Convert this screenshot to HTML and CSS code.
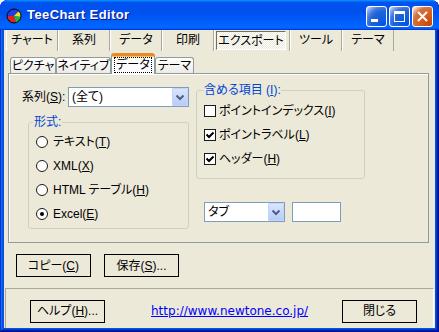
FILE: index.html
```html
<!DOCTYPE html>
<html lang="ja">
<head>
  <meta charset="UTF-8">
  <title>TeeChart Editor</title>
  <link rel="stylesheet" href="styles.css">
</head>
<body>
  <div class="window">
    <div class="titlebar">
      <svg class="app-icon" width="16" height="16" viewBox="0 0 16 16">
        <path d="M8 8 L1 8 A7 7 0 0 1 13 3 Z" fill="#1d3fe0"/>
        <path d="M8 8 L13 3 A7 7 0 0 1 15 9 Z" fill="#f6e21c"/>
        <path d="M8 8 L15 9 A7 7 0 0 1 10 14.7 Z" fill="#1fb33a"/>
        <path d="M8 8 L10 14.7 A7 7 0 0 1 1 8 Z" fill="#e3201b"/>
        <circle cx="8" cy="8" r="7" fill="none" stroke="#000" stroke-width="1"/>
      </svg>
      <span class="title">TeeChart Editor</span>
      <div class="title-buttons">
        <span class="tbtn">
          <svg width="21" height="21" viewBox="0 0 21 21"><rect x="5" y="13" width="7" height="3" fill="#fff"/></svg>
        </span>
        <span class="tbtn">
          <svg width="21" height="21" viewBox="0 0 21 21"><rect x="5.5" y="5.5" width="10" height="10" fill="none" stroke="#fff"/><rect x="5" y="5" width="11" height="3" fill="#fff"/></svg>
        </span>
        <span class="tbtn close">
          <svg width="21" height="21" viewBox="0 0 21 21"><path d="M6 6 L15 15 M15 6 L6 15" stroke="#fff" stroke-width="2"/></svg>
        </span>
      </div>
    </div>

    <div class="client">
      <!-- メインのタブ -->
      <div class="main-tabs">
        <div class="mtab">チャート</div>
        <div class="mtab">系列</div>
        <div class="mtab">データ</div>
        <div class="mtab">印刷</div>
        <div class="mtab active"><span class="pressed">エクスポート</span></div>
        <div class="mtab">ツール</div>
        <div class="mtab">テーマ</div>
      </div>

      <div class="sub-tabs">
        <div class="stab w1">ピクチャ</div>
        <div class="stab w2">ネイティブ</div>
        <div class="stab active w3"><span class="focus">データ</span></div>
        <div class="stab w4">テーマ</div>
      </div>

      <div class="sheet">
        <div class="col-left">
          <div class="series-row">
            <span class="series-label">系列<span class="key">(<u>S</u>):</span></span>
            <div class="combo wide">
              <span class="combo-text">(全て)</span>
              <span class="drop"><svg width="16" height="18" viewBox="0 0 16 18"><path d="M4.5 7.5 L8 11 L11.5 7.5" fill="none" stroke="#4d6185" stroke-width="2"/></svg></span>
            </div>
          </div>

          <fieldset class="group format">
            <legend>形式:</legend>
            <div class="radio"><span class="rb"></span><span>テキスト<span class="key">(<u>T</u>)</span></span></div>
            <div class="radio"><span class="rb"></span><span>XML<span class="key">(<u>X</u>)</span></span></div>
            <div class="radio"><span class="rb"></span><span>HTML テーブル<span class="key">(<u>H</u>)</span></span></div>
            <div class="radio"><span class="rb on"></span><span>Excel<span class="key">(<u>E</u>)</span></span></div>
          </fieldset>
        </div>

        <div class="col-right">
          <fieldset class="group include">
            <legend>含める項目 <span class="key">(<u>I</u>):</span></legend>
            <div class="check first"><span class="cb"></span><span>ポイントインデックス<span class="key">(<u>I</u>)</span></span></div>
            <div class="check"><span class="cb"><svg width="10" height="10" viewBox="0 0 10 10"><path d="M1.5 4.5 L4 7 L8.5 2.5" fill="none" stroke="#000" stroke-width="2"/></svg></span><span>ポイントラベル<span class="key">(<u>L</u>)</span></span></div>
            <div class="check"><span class="cb"><svg width="10" height="10" viewBox="0 0 10 10"><path d="M1.5 4.5 L4 7 L8.5 2.5" fill="none" stroke="#000" stroke-width="2"/></svg></span><span>ヘッダー<span class="key">(<u>H</u>)</span></span></div>
          </fieldset>

          <div class="delim-row">
            <div class="combo small">
              <span class="combo-text">タブ</span>
              <span class="drop"><svg width="16" height="18" viewBox="0 0 16 18"><path d="M4.5 7.5 L8 11 L11.5 7.5" fill="none" stroke="#4d6185" stroke-width="2"/></svg></span>
            </div>
            <div class="textbox"></div>
          </div>
        </div>
      </div>

      <div class="action-row">
        <span class="btn">コピー<span class="key">(<u>C</u>)</span></span>
        <span class="btn">保存<span class="key">(<u>S</u>)...</span></span>
      </div>

      <div class="footer">
        <span class="btn">ヘルプ<span class="key">(<u>H</u>)...</span></span>
        <a class="link" href="#">http://www.newtone.co.jp/</a>
        <span class="btn close-btn">閉じる</span>
      </div>
    </div>
  </div>
</body>
</html>
```

FILE: styles.css
```css
* {
  box-sizing: border-box;
}

body {
  margin: 0;
  background: #fff;
  font-family: "Liberation Sans", "Noto Sans CJK JP", sans-serif;
  font-size: 12px;
  line-height: 14px;
  font-feature-settings: "palt";
  color: #000;
}

u {
  text-decoration: underline;
}

.key {
  font-family: "Liberation Sans", sans-serif;
  font-feature-settings: normal;
}

/* ウィンドウ枠 */
.window {
  width: 439px;
  height: 332px;
  display: flex;
  flex-direction: column;
  background: #0054e3;
  border-radius: 8px 8px 0 0;
  overflow: hidden;
  box-shadow: inset -1px -1px #00138c, inset 1px 0 #0831d9, inset -2px -2px #001ea0,
    inset 2px 0 #166aee, inset -3px -3px #003bda, inset 3px 0 #0855dd;
}

.titlebar {
  height: 30px;
  flex: none;
  display: flex;
  align-items: center;
  padding: 0 6px;
  border-radius: 8px 8px 0 0;
  background: linear-gradient(180deg, #0997ff, #0053ee 8%, #0050ee 40%, #06f 88%, #06f 93%, #005bff 95%, #003dd7 96%, #003dd7);
}

.app-icon {
  margin-top: 1px;
}

.title {
  margin-left: 5px;
  font-family: "Liberation Sans", sans-serif;
  font-weight: bold;
  font-size: 13px;
  letter-spacing: 0.4px;
  color: #fff;
  text-shadow: 1px 1px #0f1089;
}

.title-buttons {
  margin-left: auto;
  display: flex;
  gap: 2px;
  margin-top: 2px;
}

.tbtn {
  width: 21px;
  height: 21px;
  display: block;
  border: 1px solid #fff;
  border-radius: 3px;
  background: radial-gradient(circle at 90% 90%, #0054e9 0%, #2263d5 55%, #4479e4 70%, #a3bbec 90%, #fff 100%);
}

.tbtn svg {
  display: block;
  margin: -1px;
}

.tbtn.close {
  background: radial-gradient(circle at 90% 90%, #cc4600 0%, #dc6527 55%, #cd7546 70%, #ffccb2 90%, #fff 100%);
}

.client {
  flex: 1;
  margin: 0 4px 4px;
  background: #ece9d8;
  display: flex;
  flex-direction: column;
}

/* 上段のタブ（フラットボタン） */
.main-tabs {
  height: 21px;
  display: flex;
  padding-left: 2px;
}

.mtab {
  width: 52px;
  display: flex;
  align-items: center;
  justify-content: center;
  padding-bottom: 1px;
  border-left: 1px solid #fff;
  border-right: 1px solid #aca899;
}

.mtab.active {
  width: 76px;
  padding: 1px 3px 1px 1px;
  align-items: stretch;
}

.pressed {
  flex: 1;
  display: flex;
  align-items: center;
  justify-content: center;
  border: 1px solid;
  border-color: #716f64 #fff #fff #716f64;
  background: repeating-conic-gradient(#fff 0 25%, #ece9d8 0 50%) 0 0 / 2px 2px;
}

/* 下段のタブ */
.sub-tabs {
  height: 22px;
  display: flex;
  align-items: flex-end;
  padding-left: 6px;
  position: relative;
  z-index: 1;
}

.stab {
  height: 16px;
  display: flex;
  align-items: center;
  justify-content: center;
  border: 1px solid #919b9c;
  border-bottom: none;
  border-radius: 3px 3px 0 0;
  background: linear-gradient(#fff, #ecebe6);
}

.stab.w1 { width: 46px; }
.stab.w2 { width: 55px; }
.stab.w3 { width: 44px; }
.stab.w4 { width: 39px; }

.stab.active {
  height: 21px;
  margin-bottom: -1px;
  border-top: 3px solid #e68b2c;
  box-shadow: inset 0 1px #ffc73c;
  background: #fcfcfe;
  padding-bottom: 1px;
}

.focus {
  padding: 0 1px;
  border: 1px dotted #000;
}

.sheet {
  height: 170px;
  margin: 0 6px 0 4px;
  border: 1px solid #919b9c;
  box-shadow: inset 1px 1px #fff;
  background: #ece9d8;
  display: flex;
  gap: 7px;
  padding: 9px 0 0 13px;
}

.col-left {
  width: 167px;
  padding-top: 4px;
}

.series-row {
  display: flex;
  align-items: center;
  height: 20px;
}

.series-label {
  width: 46px;
}

.combo {
  height: 20px;
  display: flex;
  align-items: center;
  border: 1px solid #7f9db9;
  background: #fff;
}

.combo.wide {
  width: 121px;
}

.combo.small {
  width: 81px;
}

.combo-text {
  flex: 1;
  padding-left: 3px;
}

.drop {
  width: 16px;
  height: 18px;
  border-radius: 2px;
  background: linear-gradient(#dce6fc, #b7cbf7);
  box-shadow: inset 0 0 0 1px #c3d3fd;
}

.drop svg {
  display: block;
}

/* グループボックス */
.group {
  margin: 0;
  min-width: 0;
  border: 1px solid #d0d0bf;
  border-radius: 3px;
}

.group legend {
  color: #0046d5;
  line-height: 14px;
}

.format {
  width: 161px;
  margin: 8px 0 0 6px;
  padding: 1px 7px 2px;
}

.format legend {
  padding: 0 1px;
  margin-left: -3px;
}

.radio {
  height: 24px;
  display: flex;
  align-items: center;
  gap: 5px;
}

.rb {
  width: 12px;
  height: 12px;
  border: 1px solid #1b1b1b;
  border-radius: 50%;
  background: #fff;
  display: flex;
  align-items: center;
  justify-content: center;
}

.rb.on::after {
  content: "";
  width: 4px;
  height: 4px;
  border-radius: 50%;
  background: #000;
}

.include {
  width: 169px;
  padding: 1px 7px 7px;
}

.include legend {
  padding: 0;
}

.check {
  height: 24px;
  display: flex;
  align-items: center;
  gap: 3px;
}

.check.first {
  height: 25px;
}

.cb {
  width: 12px;
  height: 12px;
  border: 1px solid #1b1b1b;
  background: #fff;
}

.cb svg {
  display: block;
}

.delim-row {
  display: flex;
  gap: 7px;
  margin: 23px 0 0 8px;
}

.textbox {
  width: 49px;
  height: 20px;
  border: 1px solid #7f9db9;
  background: #fff;
}

/* ボタン */
.btn {
  width: 75px;
  height: 23px;
  display: flex;
  align-items: center;
  justify-content: center;
  border: 1px solid #000;
  background: #ece9d8;
}

.action-row {
  display: flex;
  gap: 13px;
  padding-left: 12px;
  margin-top: 11px;
}

.footer {
  flex: 1;
  margin: 11px 1px 0;
  border-top: 1px solid #aca899;
  border-left: 1px solid #aca899;
  border-right: 1px solid #fff;
  display: flex;
  align-items: center;
  padding: 5px 16px 0 24px;
}

.link {
  margin-left: 46px;
  font-family: "DejaVu Sans", sans-serif;
  color: #00f;
  text-decoration: underline;
}

.close-btn {
  margin-left: auto;
}
```
